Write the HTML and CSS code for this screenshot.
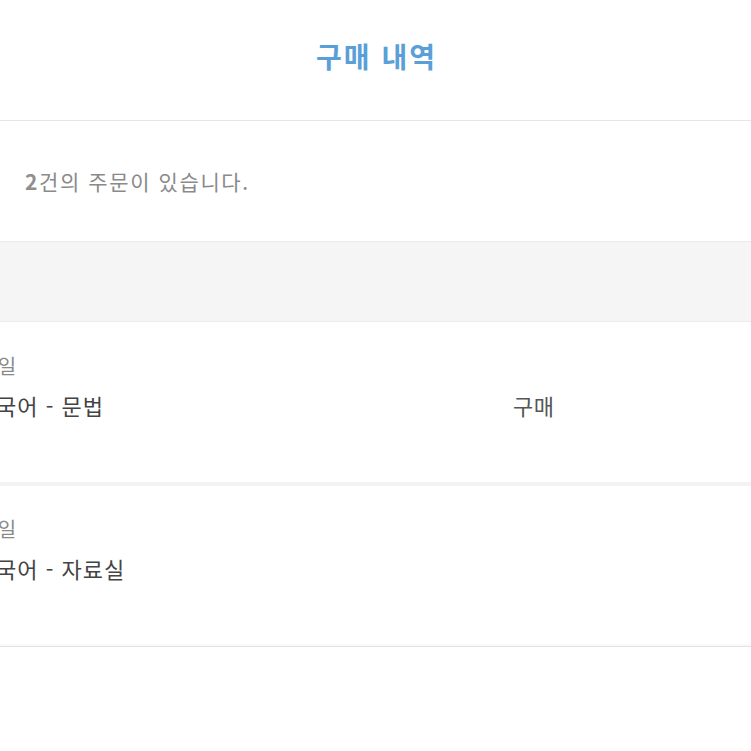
FILE: index.html
```html
<!DOCTYPE html>
<html lang="ko">
<head>
<meta charset="utf-8">
<title>구매 내역</title>
<link rel="stylesheet" href="styles.css">
</head>
<body>
<div class="page">
  <header class="header"><h1 class="title">구매 내역</h1></header>
  <section class="summary"><p class="count"><b>2</b>건의 주문이 있습니다.</p></section>
  <div class="band"></div>
  <div class="order first">
    <div class="info">
      <div class="label">구매일</div>
      <div class="name">국어 - 문법</div>
    </div>
    <div class="status">구매</div>
  </div>
  <div class="order last">
    <div class="info">
      <div class="label">구매일</div>
      <div class="name">국어 - 자료실</div>
    </div>
    <div class="status"></div>
  </div>
</div>
</body>
</html>
```
FILE: styles.css
```css
html, body { margin: 0; padding: 0; background: #fff; }
body { font-family: "Noto Sans CJK KR", "Noto Sans", sans-serif; overflow: hidden; }
.page { width: 751px; height: 751px; overflow: hidden; }
.header { height: 120px; display: flex; align-items: center; justify-content: center; border-bottom: 1px solid #e6e6e6; }
.title { margin: 0; font-size: 28px; font-weight: 700; color: #5a9fd7; line-height: 1; padding-bottom: 8px; letter-spacing: 2px; margin-right: -2px; }
.summary { height: 120px; display: flex; align-items: center; padding-left: 25px; }
.count { margin: 0; font-size: 21px; color: #8a8a8a; line-height: 1; letter-spacing: 1.6px; }
.count b { font-weight: 700; color: #8f8f8f; }
.band { height: 79px; background: #f5f5f5; border-top: 1px solid #ebebeb; border-bottom: 1px solid #ebebeb; }
.order { display: flex; box-sizing: border-box; }
.order.first { height: 164px; padding-top: 30px; border-bottom: 4px solid #f3f3f3; }
.order.last { height: 161px; padding-top: 29px; border-bottom: 1px solid #e4e4e4; box-shadow: 0 -3px 4px -3px #eeeeee inset; }
.info { width: 513px; display: flex; flex-direction: column; gap: 10px; overflow: hidden; }
.label { font-size: 20px; line-height: 28px; color: #8a8a8a; margin-left: -41px; letter-spacing: 1px; white-space: nowrap; }
.name { font-size: 22px; line-height: 30px; color: #444; margin-left: -4px; letter-spacing: 1px; white-space: nowrap; }
.status { padding-top: 38px; font-size: 22px; line-height: 30px; color: #555; letter-spacing: 0.5px; }
```
